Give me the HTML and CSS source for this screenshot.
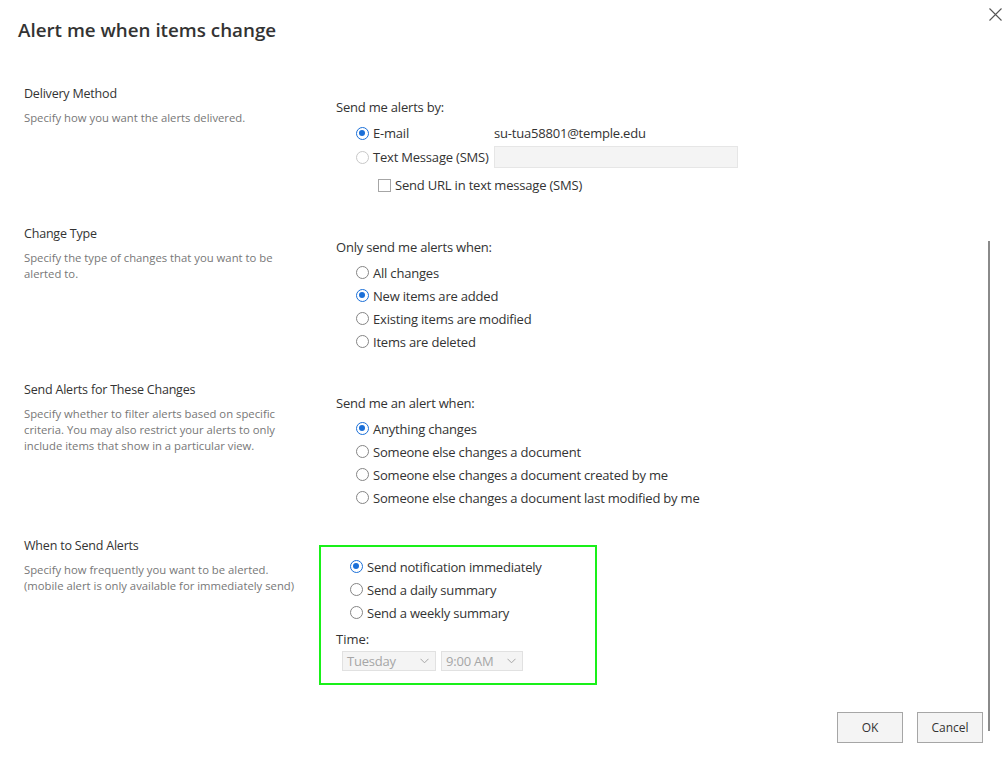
FILE: index.html
```html
<!DOCTYPE html>
<html lang="en">
<head>
<meta charset="utf-8">
<title>Alert me when items change</title>
<link rel="stylesheet" href="styles.css">
</head>
<body>
<div class="dialog">
  <div class="header">
    <h1 class="title">Alert me when items change</h1>
    <button class="close" aria-label="Close">
      <svg width="13" height="13" viewBox="0 0 13 13"><path d="M0.5 0.5 L12.5 12.5 M12.5 0.5 L0.5 12.5" stroke="#555" stroke-width="1.1" fill="none"/></svg>
    </button>
  </div>

  <div class="scroll-area">
    <section class="section">
      <div class="info">
        <div class="info-title">Delivery Method</div>
        <div class="info-desc">Specify how you want the alerts delivered.</div>
      </div>
      <div class="fields">
        <div class="field-label">Send me alerts by:</div>
        <div class="options">
          <div class="opt-row">
            <label class="opt opt-fixed"><span class="radio on"></span>E-mail</label>
            <span class="value">su-tua58801@temple.edu</span>
          </div>
          <div class="opt-row">
            <label class="opt opt-fixed"><span class="radio disabled"></span>Text Message (SMS)</label>
            <span class="textbox"></span>
          </div>
          <div class="opt-row check-row">
            <label class="opt"><span class="checkbox"></span>Send URL in text message (SMS)</label>
          </div>
        </div>
      </div>
    </section>

    <section class="section">
      <div class="info">
        <div class="info-title">Change Type</div>
        <div class="info-desc">Specify the type of changes that you want to be<br>alerted to.</div>
      </div>
      <div class="fields">
        <div class="field-label">Only send me alerts when:</div>
        <div class="options">
          <label class="opt"><span class="radio"></span>All changes</label>
          <label class="opt"><span class="radio on"></span>New items are added</label>
          <label class="opt"><span class="radio"></span>Existing items are modified</label>
          <label class="opt"><span class="radio"></span>Items are deleted</label>
        </div>
      </div>
    </section>

    <section class="section">
      <div class="info">
        <div class="info-title">Send Alerts for These Changes</div>
        <div class="info-desc">Specify whether to filter alerts based on specific<br>criteria. You may also restrict your alerts to only<br>include items that show in a particular view.</div>
      </div>
      <div class="fields">
        <div class="field-label">Send me an alert when:</div>
        <div class="options">
          <label class="opt"><span class="radio on"></span>Anything changes</label>
          <label class="opt"><span class="radio"></span>Someone else changes a document</label>
          <label class="opt"><span class="radio"></span>Someone else changes a document created by me</label>
          <label class="opt"><span class="radio"></span>Someone else changes a document last modified by me</label>
        </div>
      </div>
    </section>

    <section class="section last">
      <div class="info">
        <div class="info-title">When to Send Alerts</div>
        <div class="info-desc">Specify how frequently you want to be alerted.<br>(mobile alert is only available for immediately send)</div>
      </div>
      <div class="fields fields-boxed">
        <div class="highlight">
          <div class="options options-tight">
            <label class="opt"><span class="radio on"></span>Send notification immediately</label>
            <label class="opt"><span class="radio"></span>Send a daily summary</label>
            <label class="opt"><span class="radio"></span>Send a weekly summary</label>
          </div>
          <div class="time-label">Time:</div>
          <div class="selects">
            <div class="select sel-day"><span>Tuesday</span><svg width="9" height="6" viewBox="0 0 9 6"><path d="M0.5 0.8 L4.5 4.8 L8.5 0.8" stroke="#a6a6a6" stroke-width="1" fill="none"/></svg></div>
            <div class="select sel-time"><span>9:00 AM</span><svg width="9" height="6" viewBox="0 0 9 6"><path d="M0.5 0.8 L4.5 4.8 L8.5 0.8" stroke="#a6a6a6" stroke-width="1" fill="none"/></svg></div>
          </div>
        </div>
      </div>
    </section>

    <div class="footer">
      <button class="btn">OK</button>
      <button class="btn">Cancel</button>
    </div>
  </div>
  <div class="scrollbar"></div>
</div>
</body>
</html>
```

FILE: styles.css
```css
* { box-sizing: border-box; }
html, body { margin: 0; padding: 0; background: #fff; }
body {
  font-family: "Open Sans", "Noto Sans", sans-serif;
  color: #333;
  width: 1008px;
  height: 765px;
  overflow: hidden;
}
.dialog { position: relative; width: 1008px; height: 765px; }

.header {
  display: flex;
  justify-content: space-between;
  align-items: flex-start;
}
.title {
  margin: 16px 0 0 18px;
  font-size: 18.8px;
  font-weight: 600;
  line-height: 28px;
  color: #333;
}
.close {
  margin: 8px 6px 0 0;
  padding: 0;
  border: 0;
  background: none;
  width: 13px;
  height: 13px;
  display: flex;
}

.scroll-area { padding-top: 42px; }

.section {
  display: grid;
  grid-template-columns: 312px 1fr;
  padding-left: 24px;
  padding-bottom: 29px;
}
.info-title {
  font-size: 12.5px;
  line-height: 16px;
  letter-spacing: -0.2px;
  color: #333;
}
.info-desc {
  margin-top: 8px;
  font-size: 11.3px;
  line-height: 16px;
  color: #777;
}
.fields { padding-top: 11px; }
.field-label { font-size: 13px; line-height: 20px; letter-spacing: -0.2px; }
.options { margin-top: 4px; padding-left: 20px; }
.opt {
  display: flex;
  align-items: center;
  height: 23px;
  font-size: 13px;
  letter-spacing: -0.2px;
  white-space: nowrap;
}
.opt-row { display: flex; align-items: center; height: 24px; }
.opt-row .opt { height: 24px; }
.opt-fixed { width: 138px; }
.check-row { margin-top: 4px; padding-left: 22px; }
.value { font-size: 13px; letter-spacing: -0.2px; }
.textbox {
  display: block;
  width: 244px;
  height: 22px;
  background: #f4f4f4;
  border: 1px solid #e6e6e6;
}

.radio {
  flex: none;
  width: 13px;
  height: 13px;
  margin-right: 4px;
  border-radius: 50%;
  border: 1.6px solid #858585;
  background: #fff;
  position: relative;
}
.radio.on { border-color: #1a6fd8; }
.radio.on::after {
  content: "";
  position: absolute;
  left: 2px; top: 2px;
  width: 6px; height: 6px;
  border-radius: 50%;
  background: #1a6fd8;
}
.radio.disabled { border-color: #c8c8c8; }
.checkbox {
  flex: none;
  width: 13px;
  height: 13px;
  margin-right: 4px;
  border: 1px solid #a6a6a6;
  background: #fff;
}

.fields-boxed { padding-top: 7px; }
.highlight {
  margin-left: -17px;
  width: 278px;
  border: 2px solid #19f019;
  padding: 8px 0 12px 15px;
}
.options-tight { margin-top: 0; padding-left: 14px; }
.time-label { margin-top: 5px; font-size: 13px; line-height: 20px; }
.selects { display: flex; gap: 5px; margin-top: 2px; padding-left: 6px; }
.select {
  display: flex;
  align-items: center;
  justify-content: space-between;
  height: 20px;
  padding: 0 6px 0 4px;
  background: #f4f4f4;
  border: 1px solid #e1e1e1;
  color: #a6a6a6;
  font-size: 13px;
  letter-spacing: -0.2px;
}
.sel-day { width: 94px; }
.sel-time { width: 82px; }

.footer {
  display: flex;
  justify-content: flex-end;
  gap: 14px;
  padding-right: 25px;
  margin-top: -2px;
}
.btn {
  width: 66px;
  height: 31px;
  background: #f4f4f4;
  border: 1px solid #a6a6a6;
  font-family: inherit;
  font-size: 12px;
  color: #333;
  padding: 0;
}

.scrollbar {
  position: absolute;
  left: 988px;
  top: 241px;
  width: 2px;
  height: 490px;
  background: #8a8a8a;
}
```
